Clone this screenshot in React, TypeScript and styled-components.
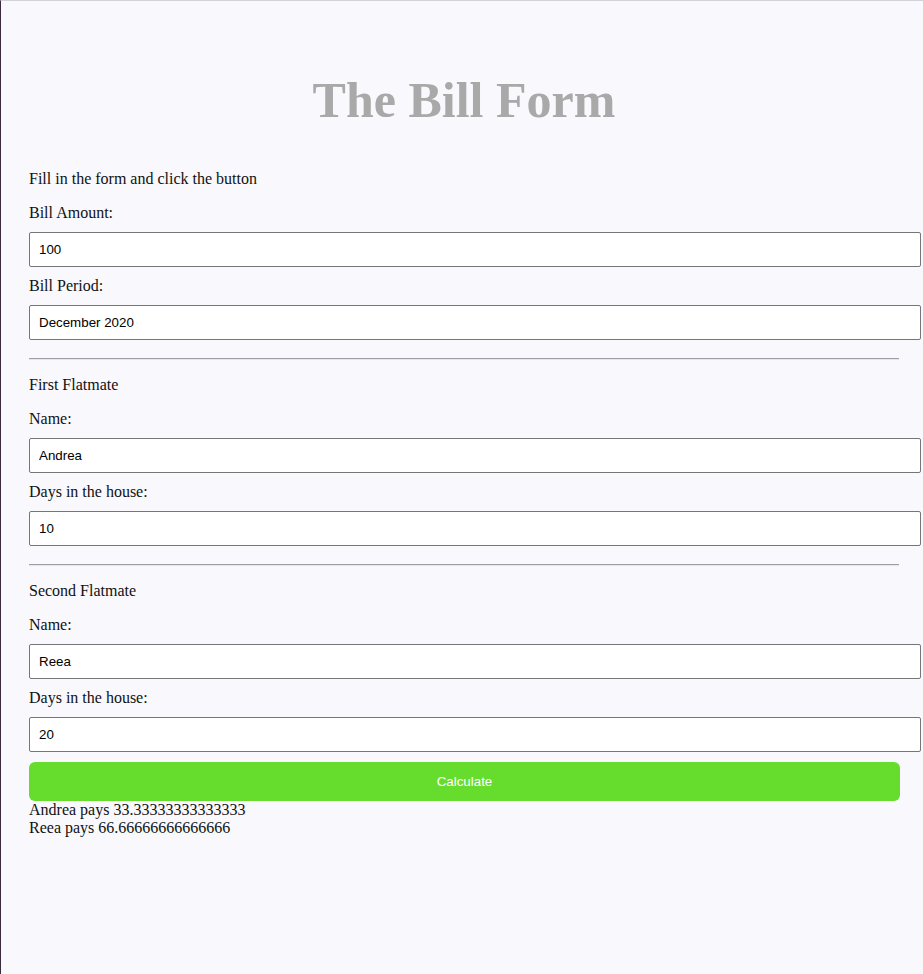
import React from "react";
import styled, { createGlobalStyle } from "styled-components";

const Global = createGlobalStyle`
  html, body { margin: 0; padding: 0; background: #f8f8fd; }
  body { font-family: "Liberation Serif", "Times New Roman", serif; font-size: 16px; color: #111; }
`;

const Frame = styled.div`
  min-height: 974px;
  box-sizing: border-box;
  border-top: 1px solid #d2d2d8;
  border-left: 1px solid #3a2c3a;
  background: #f8f8fd;
`;

const Container = styled.main`
  margin-left: 28px;
  width: 870px;
  display: flex;
  flex-direction: column;
`;

const Title = styled.h1`
  margin: 70px 0 41px;
  font-family: "Liberation Serif", "Times New Roman", serif;
  font-size: 50px;
  font-weight: bold;
  line-height: normal;
  text-align: center;
  color: #a9a9a9;
`;

const Text = styled.p`
  margin: 0 0 16px;
  line-height: normal;
`;

const Label = styled.label`
  display: block;
  line-height: normal;
`;

const Input = styled.input`
  box-sizing: border-box;
  display: block;
  width: calc(100% + 22px);
  height: 35px;
  margin: 10px 0;
  padding: 0 9px;
  border: 1px solid #767676;
  border-radius: 2px;
  background: #fff;
  font-family: "Liberation Sans", Arial, sans-serif;
  font-size: 13.33px;
  color: #000;
  outline: none;
`;

const Divider = styled.hr`
  width: 100%;
  height: 0;
  margin: 8px 0 16px;
  border: none;
  border-top: 1px solid #9e9ea4;
  border-bottom: 1px solid #e6e6ec;
`;

const Button = styled.button`
  box-sizing: border-box;
  width: calc(100% + 1px);
  height: 39px;
  margin: 0;
  border: none;
  border-radius: 6px;
  background: #66dd2c;
  color: #fff;
  font-family: "Liberation Sans", Arial, sans-serif;
  font-size: 13.33px;
  cursor: pointer;
`;

const Result = styled.div`
  line-height: normal;
`;

type FieldProps = { id: string; label: string; value: string };

const Field = ({ id, label, value }: FieldProps) => (
  <>
    <Label htmlFor={id}>{label}</Label>
    <Input id={id} defaultValue={value} />
  </>
);

export default function App() {
  return (
    <>
      <Global />
      <Frame>
        <Container>
          <Title>The Bill Form</Title>
          <Text>Fill in the form and click the button</Text>
          <Field id="amount" label="Bill Amount:" value="100" />
          <Field id="period" label="Bill Period:" value="December 2020" />
          <Divider />
          <Text>First Flatmate</Text>
          <Field id="name1" label="Name:" value="Andrea" />
          <Field id="days1" label="Days in the house:" value="10" />
          <Divider />
          <Text>Second Flatmate</Text>
          <Field id="name2" label="Name:" value="Reea" />
          <Field id="days2" label="Days in the house:" value="20" />
          <Button type="button">Calculate</Button>
          <Result>Andrea pays 33.33333333333333</Result>
          <Result>Reea pays 66.66666666666666</Result>
        </Container>
      </Frame>
    </>
  );
}
